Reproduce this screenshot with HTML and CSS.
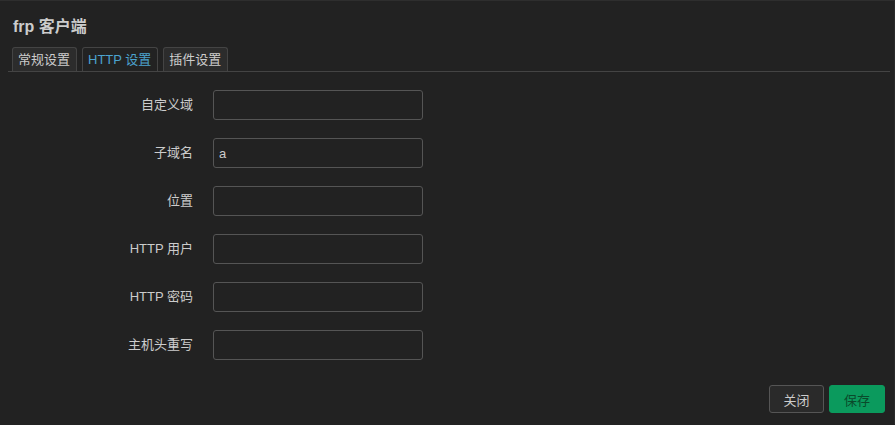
FILE: index.html
```html
<!DOCTYPE html>
<html lang="zh-CN">
<head>
    <meta charset="UTF-8">
    <title>frp 客户端</title>
    <link rel="stylesheet" href="styles.css">
</head>
<body>
    <div class="modal">
        <h3 class="modal-title">frp 客户端</h3>

        <ul class="tabs">
            <li class="tab">常规设置</li>
            <li class="tab active">HTTP 设置</li>
            <li class="tab">插件设置</li>
        </ul>

        <div class="form">
            <div class="row">
                <label>自定义域</label>
                <input type="text" value="">
            </div>
            <div class="row">
                <label>子域名</label>
                <input type="text" value="a">
            </div>
            <div class="row">
                <label>位置</label>
                <input type="text" value="">
            </div>
            <div class="row">
                <label>HTTP 用户</label>
                <input type="text" value="">
            </div>
            <div class="row">
                <label>HTTP 密码</label>
                <input type="text" value="">
            </div>
            <div class="row">
                <label>主机头重写</label>
                <input type="text" value="">
            </div>
        </div>

        <div class="actions">
            <button class="btn">关闭</button>
            <button class="btn save">保存</button>
        </div>
    </div>
</body>
</html>
```

FILE: styles.css
```css
body {
    margin: 0;
    background-color: #222;
    color: #ccc;
    font-family: "Liberation Sans", "Noto Sans CJK SC", sans-serif;
    font-size: 13px;
}

.modal {
    height: 424px;
    border-top: 1px solid #2e2e2e;
    border-right: 1px solid #2a2a2a;
    box-sizing: border-box;
}

.modal-title {
    margin: 0;
    padding: 12px 13px 0;
    height: 34px;
    font-size: 16px;
    font-weight: bold;
    color: #ccc;
}

.tabs {
    list-style: none;
    margin: 0 4px 0 8px;
    padding: 0 0 0 4px;
    display: flex;
    gap: 5px;
    border-bottom: 1px solid #444;
}

.tab {
    height: 23px;
    line-height: 23px;
    padding: 0 6px 0 5px;
    border: 1px solid #444;
    border-bottom: none;
    border-radius: 3px 3px 0 0;
    background-color: #2c2c2c;
    color: #ccc;
}

.tab.active {
    background-color: #222;
    color: #4ca3cf;
}

.form {
    padding-top: 18px;
    display: flex;
    flex-direction: column;
    gap: 18px;
}

.row {
    display: flex;
    align-items: center;
}

.row label {
    width: 213px;
    text-align: right;
    padding: 0 20px 4px 0;
    box-sizing: border-box;
    color: #ccc;
}

.row input {
    width: 210px;
    height: 30px;
    box-sizing: border-box;
    background-color: #222;
    border: 1px solid #555;
    border-radius: 3px;
    color: #ccc;
    padding: 0 5px;
    font-family: inherit;
    font-size: 13px;
}

.actions {
    display: flex;
    justify-content: flex-end;
    gap: 5px;
    padding: 25px 9px 0 0;
}

.btn {
    width: 55px;
    height: 28px;
    border: 1px solid #555;
    border-radius: 3px;
    background-color: #2a2a2a;
    color: #ccc;
    font-family: inherit;
    font-size: 13px;
}

.btn.save {
    width: 56px;
    background-color: #0b9a5d;
    border-color: #0b9a5d;
    color: #0a4a2b;
}
```
